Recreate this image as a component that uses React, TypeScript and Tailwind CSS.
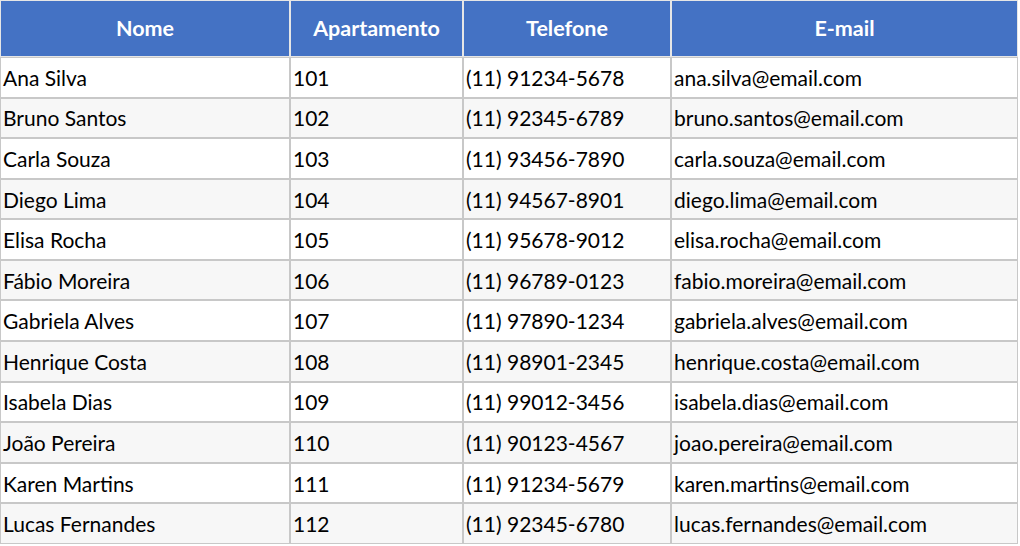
import React from "react";

const rows = [
  ["Ana Silva", "101", "(11) 91234-5678", "ana.silva@email.com"],
  ["Bruno Santos", "102", "(11) 92345-6789", "bruno.santos@email.com"],
  ["Carla Souza", "103", "(11) 93456-7890", "carla.souza@email.com"],
  ["Diego Lima", "104", "(11) 94567-8901", "diego.lima@email.com"],
  ["Elisa Rocha", "105", "(11) 95678-9012", "elisa.rocha@email.com"],
  ["Fábio Moreira", "106", "(11) 96789-0123", "fabio.moreira@email.com"],
  ["Gabriela Alves", "107", "(11) 97890-1234", "gabriela.alves@email.com"],
  ["Henrique Costa", "108", "(11) 98901-2345", "henrique.costa@email.com"],
  ["Isabela Dias", "109", "(11) 99012-3456", "isabela.dias@email.com"],
  ["João Pereira", "110", "(11) 90123-4567", "joao.pereira@email.com"],
  ["Karen Martins", "111", "(11) 91234-5679", "karen.martins@email.com"],
  ["Lucas Fernandes", "112", "(11) 92345-6780", "lucas.fernandes@email.com"],
];

const headers = ["Nome", "Apartamento", "Telefone", "E-mail"];

export default function App() {
  return (
    <div className="w-[1020px] h-[546px] bg-white font-['Lato','Liberation_Sans',sans-serif] text-black">
      <table className="w-[1018px] table-fixed border-separate border-spacing-0">
        <colgroup>
          <col className="w-[290px]" />
          <col className="w-[173px]" />
          <col className="w-[208px]" />
          <col className="w-[347px]" />
        </colgroup>
        <thead>
          <tr>
            {headers.map((h) => (
              <th
                key={h}
                className="h-[57px] p-0 border border-[#e6e6e6] bg-[#4472c4] text-white text-[21.5px] leading-none font-bold text-center align-middle"
              >
                {h}
              </th>
            ))}
          </tr>
        </thead>
        <tbody>
          {rows.map((r, i) => (
            <tr key={i} className={i % 2 === 0 ? "bg-white" : "bg-[#f7f7f7]"}>
              {r.map((c, j) => (
                <td
                  key={j}
                  className="h-[40.58px] py-0 pl-[2px] pr-1 border border-[#c8c8c8] text-[21px] leading-none align-middle whitespace-nowrap"
                >
                  {c}
                </td>
              ))}
            </tr>
          ))}
        </tbody>
      </table>
    </div>
  );
}
